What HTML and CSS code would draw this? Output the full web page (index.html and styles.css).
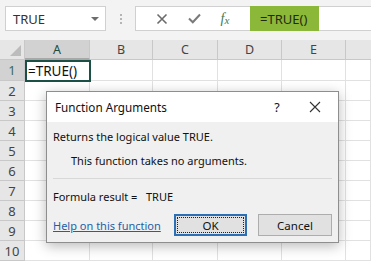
FILE: index.html
```html
<!DOCTYPE html>
<html>
<head>
<meta charset="utf-8">
<link rel="stylesheet" href="styles.css">
</head>
<body>
<div class="app">
  <div class="toolbar">
    <div class="namebox">
      <span class="name-text">TRUE</span>
      <span class="caret"></span>
    </div>
    <div class="dots"><i></i><i></i><i></i></div>
    <div class="fbar">
      <div class="fbtn">
        <svg width="12" height="12" viewBox="0 0 12 12"><path d="M1.5 1.5 L10.5 10.5 M10.5 1.5 L1.5 10.5" stroke="#6b6b6b" stroke-width="1.6" fill="none"/></svg>
      </div>
      <div class="fbtn">
        <svg width="13" height="11" viewBox="0 0 13 11"><path d="M1 5.5 L4.8 9.3 L12 1.5" stroke="#7a7a7a" stroke-width="2" fill="none"/></svg>
      </div>
      <div class="fbtn fx"><span class="fx-f">f</span><span class="fx-x">x</span></div>
      <div class="formula">=TRUE()</div>
    </div>
  </div>
  <div class="sheet">
    <div class="corner"><span class="tri"></span></div>
    <div class="ch sel">A</div>
    <div class="ch">B</div>
    <div class="ch">C</div>
    <div class="ch">D</div>
    <div class="ch">E</div>
    <div class="ch last"></div>

    <div class="rh sel r1">1</div>
    <div class="cell r1 active">=TRUE()</div>
    <div class="cell r1"></div><div class="cell r1"></div><div class="cell r1"></div><div class="cell r1"></div><div class="cell r1"></div>

    <div class="rh">2</div><div class="cell"></div><div class="cell"></div><div class="cell"></div><div class="cell"></div><div class="cell"></div><div class="cell"></div>
    <div class="rh">3</div><div class="cell"></div><div class="cell"></div><div class="cell"></div><div class="cell"></div><div class="cell"></div><div class="cell"></div>
    <div class="rh">4</div><div class="cell"></div><div class="cell"></div><div class="cell"></div><div class="cell"></div><div class="cell"></div><div class="cell"></div>
    <div class="rh">5</div><div class="cell"></div><div class="cell"></div><div class="cell"></div><div class="cell"></div><div class="cell"></div><div class="cell"></div>
    <div class="rh">6</div><div class="cell"></div><div class="cell"></div><div class="cell"></div><div class="cell"></div><div class="cell"></div><div class="cell"></div>
    <div class="rh">7</div><div class="cell"></div><div class="cell"></div><div class="cell"></div><div class="cell"></div><div class="cell"></div><div class="cell"></div>
    <div class="rh">8</div><div class="cell"></div><div class="cell"></div><div class="cell"></div><div class="cell"></div><div class="cell"></div><div class="cell"></div>
    <div class="rh">9</div><div class="cell"></div><div class="cell"></div><div class="cell"></div><div class="cell"></div><div class="cell"></div><div class="cell"></div>
    <div class="rh">10</div><div class="cell"></div><div class="cell"></div><div class="cell"></div><div class="cell"></div><div class="cell"></div><div class="cell"></div>
  </div>

  <div class="dialog">
    <div class="dlg-title">
      <span class="dlg-name">Function Arguments</span>
      <span class="dlg-q">?</span>
      <span class="dlg-x">
        <svg width="12" height="12" viewBox="0 0 12 12"><path d="M1 1 L11 11 M11 1 L1 11" stroke="#333" stroke-width="1.1" fill="none"/></svg>
      </span>
    </div>
    <div class="dlg-body">
      <div class="desc">Returns the logical value TRUE.</div>
      <div class="noargs">This function takes no arguments.</div>
      <div class="sep"></div>
      <div class="result">Formula result =&nbsp;&nbsp;&nbsp;TRUE</div>
      <div class="footer">
        <a class="help">Help on this function</a>
        <div class="btn ok"><span class="focus">OK</span></div>
        <div class="btn cancel">Cancel</div>
      </div>
    </div>
  </div>
</div>
</body>
</html>
```
FILE: styles.css
```css
html, body {
  margin: 0;
  padding: 0;
  background: #ffffff;
  overflow: hidden;
}
.app {
  position: relative;
  width: 371px;
  height: 262px;
  overflow: hidden;
  font-family: "Noto Sans", "Open Sans", sans-serif;
}
.toolbar {
  height: 40px;
  background: #f3f3f3;
  display: flex;
  align-items: flex-start;
  padding-top: 6px;
  box-sizing: border-box;
}
.namebox {
  margin-left: 5px;
  width: 101px;
  height: 25px;
  box-sizing: border-box;
  border: 1px solid #d0d0d0;
  background: #fff;
  display: flex;
  align-items: center;
  padding-left: 7px;
  padding-right: 6px;
}
.name-text {
  flex: 1;
  font-size: 13px;
  color: #333;
}
.caret {
  width: 0;
  height: 0;
  border-left: 4px solid transparent;
  border-right: 4px solid transparent;
  border-top: 4px solid #6d6d6d;
}
.dots {
  width: 29px;
  height: 25px;
  display: flex;
  flex-direction: column;
  align-items: center;
  justify-content: center;
  gap: 2px;
}
.dots i {
  display: block;
  width: 2px;
  height: 2px;
  background: #b5b5b5;
}
.fbar {
  flex: 1;
  height: 25px;
  box-sizing: border-box;
  border: 1px solid #d0d0d0;
  border-right: none;
  background: #fff;
  display: flex;
  align-items: center;
  padding-left: 10px;
}
.fbtn {
  width: 32px;
  height: 23px;
  display: flex;
  align-items: center;
  justify-content: center;
}
.fx {
  width: 30px;
  font-family: "Liberation Serif", serif;
  font-style: italic;
  color: #3f7a52;
  font-size: 14px;
}
.fx-x { font-size: 11px; margin-top: 3px; }
.formula {
  margin-left: 10px;
  width: 69px;
  height: 25px;
  margin-top: -1px;
  margin-bottom: -1px;
  background: #8cb83a;
  color: #1f2a10;
  font-size: 13px;
  display: flex;
  align-items: center;
  padding-left: 10px;
  box-sizing: border-box;
}
.sheet {
  display: grid;
  grid-template-columns: 25px 65px 63px 65px 64px 64px 1fr;
  grid-template-rows: 20px 21px repeat(9, 20px);
}
.corner {
  background: #e6e6e6;
  border-right: 1px solid #c8c8c8;
  border-bottom: 1px solid #c8c8c8;
  box-sizing: border-box;
  position: relative;
}
.tri {
  position: absolute;
  right: 3px;
  bottom: 3px;
  width: 0;
  height: 0;
  border-left: 11px solid transparent;
  border-bottom: 11px solid #bcbcbc;
}
.ch {
  background: #e6e6e6;
  border-right: 1px solid #c8c8c8;
  border-bottom: 1px solid #c8c8c8;
  box-sizing: border-box;
  font-size: 12.5px;
  color: #444;
  display: flex;
  align-items: center;
  justify-content: center;
}
.ch.sel {
  background: #d2d2d2;
  color: #214a3b;
  border-bottom: 2px solid #a8a8a8;
}
.ch.last { border-right: none; }
.rh {
  background: #e6e6e6;
  border-right: 1px solid #c8c8c8;
  border-bottom: 1px solid #c8c8c8;
  box-sizing: border-box;
  font-size: 13px;
  color: #444;
  display: flex;
  align-items: center;
  justify-content: center;
}
.rh.sel {
  background: #d2d2d2;
  color: #3d6a59;
}
.cell {
  border-right: 1px solid #e1e1e1;
  border-bottom: 1px solid #e1e1e1;
  box-sizing: border-box;
  background: #fff;
}
.cell.active {
  position: relative;
  border: 2px solid #1c4f45;
  margin: 0 -1px -1px 0;
  font-size: 13.5px;
  color: #111;
  display: flex;
  align-items: center;
  padding-left: 1px;
  z-index: 1;
}
.dialog {
  position: absolute;
  left: 46px;
  top: 91px;
  width: 293px;
  height: 152px;
  box-sizing: border-box;
  border: 1px solid #8e8e8e;
  background: #f0f0f0;
  box-shadow: 0 3px 12px rgba(0,0,0,0.28);
  z-index: 5;
  display: flex;
  flex-direction: column;
}
.dlg-title {
  height: 30px;
  background: #fff;
  display: flex;
  align-items: center;
  padding-left: 8px;
  font-size: 11.7px;
  color: #111;
}
.dlg-name { flex: 1; }
.dlg-q {
  width: 20px;
  text-align: center;
  margin-right: 22px;
  font-size: 12.5px;
}
.dlg-x {
  width: 12px;
  height: 12px;
  display: flex;
  margin-right: 17px;
}
.dlg-body {
  flex: 1;
  padding: 0 6px 0 6px;
  font-size: 11px;
  color: #111;
}
.desc {
  margin-top: 7px;
  height: 17px;
}
.noargs {
  margin-top: 7px;
  padding-left: 18px;
  height: 17px;
}
.sep {
  margin-top: 8px;
  height: 1px;
  background: #d8d8d8;
}
.result {
  margin-top: 10px;
  height: 17px;
}
.footer {
  margin-top: 8px;
  display: flex;
  align-items: center;
}
.help {
  color: #1f5fa8;
  text-decoration: underline;
  width: 121px;
}
.btn {
  height: 22px;
  box-sizing: border-box;
  border: 1px solid #adadad;
  background: #e1e1e1;
  display: flex;
  align-items: center;
  justify-content: center;
  font-size: 11.5px;
}
.ok {
  width: 73px;
  border: 2px solid #2d6fb4;
  padding: 1px;
}
.focus {
  flex: 1;
  align-self: stretch;
  border: 1px dotted #222;
  display: flex;
  align-items: center;
  justify-content: center;
}
.cancel {
  width: 74px;
  margin-left: 11px;
}
```
